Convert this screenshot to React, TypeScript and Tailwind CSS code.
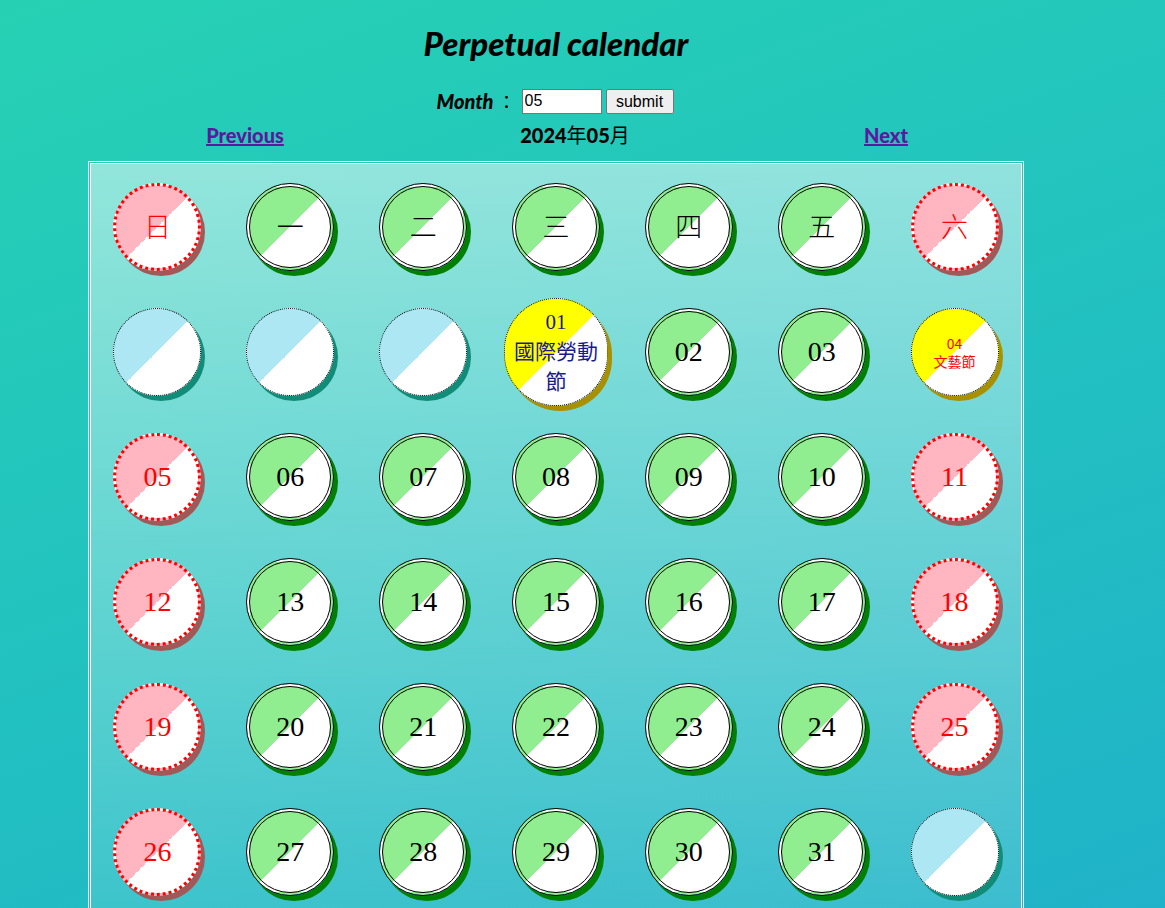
import React from 'react';

type Cell = {
  label?: string;
  holiday?: string;
  weekend?: boolean;
  header?: boolean;
};

const headers = ['日', '一', '二', '三', '四', '五', '六'];

const holidays: Record<number, string> = {
  1: '國際勞動節',
  4: '文藝節',
};

function buildRows(): Cell[][] {
  const rows: Cell[][] = [headers.map((h, i) => ({ label: h, header: true, weekend: i === 0 || i === 6 }))];
  const firstDay = 3;
  const days = 31;
  let week: Cell[] = [];
  for (let i = 0; i < firstDay; i++) week.push({});
  for (let d = 1; d <= days; d++) {
    const col = week.length;
    week.push({
      label: String(d).padStart(2, '0'),
      holiday: holidays[d],
      weekend: col === 0 || col === 6,
    });
    if (week.length === 7) {
      rows.push(week);
      week = [];
    }
  }
  if (week.length) {
    while (week.length < 7) week.push({});
    rows.push(week);
  }
  return rows;
}

function Circle({ cell }: { cell: Cell }) {
  if (!cell.label) {
    return (
      <div className="w-[88px] h-[88px] rounded-full border border-dotted border-black bg-[linear-gradient(135deg,#ade7f3_50%,#ffffff_50%)] shadow-[4px_5px_0_#118c78]" />
    );
  }

  if (cell.holiday) {
    if (cell.weekend) {
      return (
        <div className="w-[88px] h-[88px] rounded-full border border-dotted border-black bg-[linear-gradient(135deg,#ffff00_50%,#ffffff_50%)] shadow-[4px_5px_0_#a89000] flex flex-col items-center justify-center text-[#ff0000] text-[14px] leading-[18px] font-['Noto_Sans_CJK_TC',sans-serif]">
          <span>{cell.label}</span>
          <span>{cell.holiday}</span>
        </div>
      );
    }
    return (
      <div className="w-[104px] h-[108px] rounded-full border border-dotted border-black bg-[linear-gradient(135deg,#ffff00_50%,#ffffff_50%)] shadow-[4px_5px_0_#a89000] flex flex-col items-center justify-center text-[#1a1a8c] px-2">
        <span className="text-[21px] leading-[26px] font-['Liberation_Serif',serif]">{cell.label}</span>
        <span className="text-[21px] leading-[30px] text-center font-['Noto_Sans_CJK_TC',sans-serif] w-[90px]">{cell.holiday}</span>
      </div>
    );
  }

  const font = cell.header
    ? "font-['Noto_Sans_CJK_TC',sans-serif] text-[27px] font-light"
    : "font-['Liberation_Serif',serif] text-[28px]";

  if (cell.weekend) {
    return (
      <div className={`w-[88px] h-[88px] rounded-full border-[3px] border-dotted border-[#ff0000] bg-[linear-gradient(135deg,#ffb6c1_50%,#ffffff_50%)] shadow-[4px_5px_0_#a35858] flex items-center justify-center text-[#ff0000] ${font}`}>
        {cell.label}
      </div>
    );
  }

  return (
    <div className={`w-[88px] h-[88px] rounded-full border-[4px] border-double border-black bg-[linear-gradient(135deg,#90ee90_50%,#ffffff_50%)] shadow-[4px_5px_0_#008000] flex items-center justify-center text-black ${font}`}>
      {cell.label}
    </div>
  );
}

export default function App() {
  const rows = buildRows();

  return (
    <div className="min-h-screen bg-[linear-gradient(160deg,#26d1b3_0%,#22c2c0_50%,#20b2c9_100%)] overflow-hidden">
      <div className="ml-[88px] w-[936px] pt-[23px]">
        <h1 className="text-center text-[33px] leading-[40px] font-black italic font-['Lato',sans-serif] text-black">
          Perpetual calendar
        </h1>

        <form className="mt-[25px] flex items-center justify-center gap-0 h-[26px]" onSubmit={(e) => e.preventDefault()}>
          <span className="ml-[-2px] text-[20px] font-black italic font-['Lato',sans-serif] text-black">Month</span>
          <span className="ml-[4px] mr-[6px] text-[18px] font-['Noto_Sans_CJK_TC',sans-serif] text-black">：</span>
          <input
            defaultValue="05"
            className="w-[80px] h-[25px] bg-white border border-[#767676] px-[2px] text-[16px] font-['Liberation_Sans',sans-serif] text-black outline-none"
          />
          <button
            type="submit"
            className="ml-[4px] w-[68px] h-[25px] bg-[#efefef] border border-[#767676] rounded-[2px] text-[16px] font-['Liberation_Sans',sans-serif] text-black"
          >
            submit
          </button>
        </form>

        <div className="mt-[11px] flex items-center h-[20px]">
          <div className="w-[314px] text-center">
            <a href="#" className="text-[#5a1a9e] underline font-black text-[20px] font-['Lato',sans-serif]">
              Previous
            </a>
          </div>
          <div className="w-[346px] text-center text-[20px] font-black font-['Lato','Noto_Sans_CJK_TC',sans-serif] text-black">
            2024<span className="font-normal">年</span>05<span className="font-normal">月</span>
          </div>
          <div className="w-[276px] text-center">
            <a href="#" className="text-[#5a1a9e] underline font-black text-[20px] font-['Lato',sans-serif]">
              Next
            </a>
          </div>
        </div>

        <div className="mt-[16px] border-[3px] border-double border-white bg-clip-padding bg-[linear-gradient(to_bottom,rgba(255,255,255,0.5),rgba(255,255,255,0.12))]">
          {rows.map((row, r) => (
            <div key={r} className="grid grid-cols-7 h-[125px]">
              {row.map((cell, c) => (
                <div key={c} className="flex items-center justify-center">
                  <Circle cell={cell} />
                </div>
              ))}
            </div>
          ))}
        </div>
      </div>
    </div>
  );
}
